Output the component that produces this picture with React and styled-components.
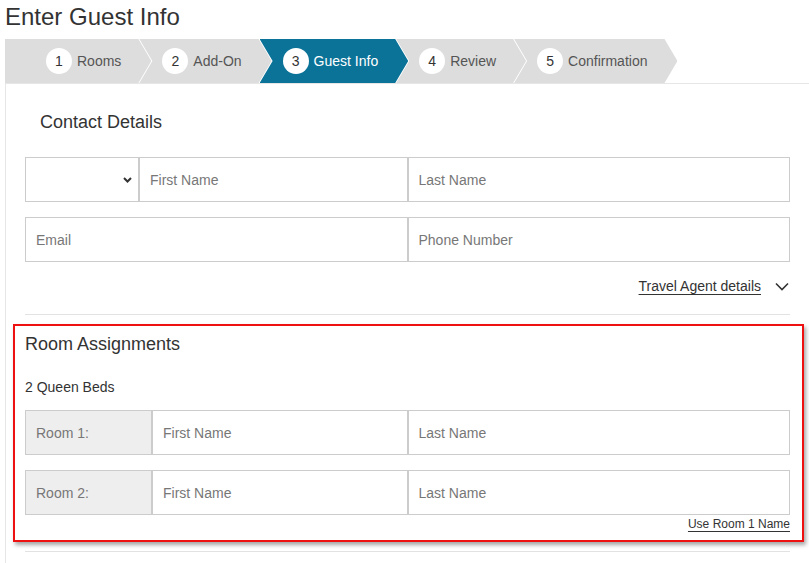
import React from "react";
import styled, { createGlobalStyle } from "styled-components";

const GlobalStyle = createGlobalStyle`
  body {
    margin: 0;
    background: #ffffff;
    font-family: "Liberation Sans", Arial, sans-serif;
    color: #333333;
  }
  * {
    box-sizing: border-box;
  }
`;

const steps = ["Rooms", "Add-On", "Guest Info", "Review", "Confirmation"];
const ACTIVE = 2;

const rooms = ["Room 1:", "Room 2:"];

function App() {
  return (
    <>
      <GlobalStyle />
      <Page>
        <Title>Enter Guest Info</Title>
        <StepBar>
          {steps.map((s, i) => (
            <Step key={s} $first={i === 0} $active={i === ACTIVE}>
              <StepNum>{i + 1}</StepNum>
              {s}
            </Step>
          ))}
        </StepBar>
        <Panel>
          <ContactTitle>Contact Details</ContactTitle>
          <FieldRow $lead={114} $mt={23}>
            <SelectBox>
              <svg width="9" height="6" viewBox="0 0 9 6">
                <polyline
                  points="1,1 4.5,4.5 8,1"
                  fill="none"
                  stroke="#333"
                  strokeWidth="2"
                />
              </svg>
            </SelectBox>
            <Field placeholder="First Name" />
            <Field placeholder="Last Name" />
          </FieldRow>
          <FieldRow $mt={15}>
            <Field placeholder="Email" />
            <Field placeholder="Phone Number" />
          </FieldRow>
          <AgentRow>
            <LinkText>Travel Agent details</LinkText>
            <svg width="14" height="9" viewBox="0 0 14 9">
              <polyline
                points="1,1.5 7,7.5 13,1.5"
                fill="none"
                stroke="#333"
                strokeWidth="1.6"
              />
            </svg>
          </AgentRow>
          <Divider $mt={18} />
          <RoomBox>
            <SectionTitle>Room Assignments</SectionTitle>
            <RoomType>2 Queen Beds</RoomType>
            {rooms.map((r, i) => (
              <FieldRow key={r} $lead={127} $mt={i === 0 ? 13 : 15}>
                <RoomLabel>{r}</RoomLabel>
                <Field placeholder="First Name" />
                <Field placeholder="Last Name" />
              </FieldRow>
            ))}
            <UseRow>
              <SmallLink>Use Room 1 Name</SmallLink>
            </UseRow>
          </RoomBox>
          <Divider $mt={9} />
        </Panel>
      </Page>
    </>
  );
}

export default App;

const Page = styled.div`
  padding-left: 5px;
`;

const Title = styled.h1`
  margin: 0 0 5px;
  font-size: 24px;
  font-weight: normal;
  line-height: 34px;
  color: #333;
`;

const StepBar = styled.div`
  display: flex;
  height: 44px;
`;

const Step = styled.div`
  display: flex;
  align-items: center;
  gap: 5px;
  height: 44px;
  padding: 0 30px 0 ${(p) => (p.$first ? "41px" : "23px")};
  margin-left: ${(p) => (p.$first ? "0" : "-12px")};
  font-size: 14px;
  color: ${(p) => (p.$active ? "#ffffff" : "#555555")};
  background: ${(p) => (p.$active ? "#0b7398" : "#dddddd")};
  clip-path: ${(p) =>
    p.$first
      ? "polygon(0 0, calc(100% - 13px) 0, 100% 50%, calc(100% - 13px) 100%, 0 100%)"
      : "polygon(0 0, calc(100% - 13px) 0, 100% 50%, calc(100% - 13px) 100%, 0 100%, 13px 50%)"};
`;

const StepNum = styled.span`
  display: flex;
  align-items: center;
  justify-content: center;
  width: 26px;
  height: 26px;
  border-radius: 50%;
  background: #ffffff;
  color: #333;
  font-size: 14px;
`;

const Panel = styled.div`
  border-top: 1px solid #e6e6e6;
  border-left: 1px solid #e6e6e6;
  padding: 0 19px 20px 19px;
`;

const ContactTitle = styled.h2`
  margin: 26px 0 0;
  padding-left: 15px;
  font-size: 18px;
  font-weight: normal;
  line-height: 24px;
  color: #333;
`;

const SectionTitle = styled.h2`
  margin: 0;
  font-size: 18px;
  font-weight: normal;
  line-height: 24px;
  color: #333;
`;

const FieldRow = styled.div`
  display: grid;
  grid-template-columns: ${(p) =>
    p.$lead ? `${p.$lead}px calc(50% - ${p.$lead}px) 50%` : "50% 50%"};
  height: 45px;
  margin-top: ${(p) => p.$mt || 0}px;
`;

const Field = styled.input`
  height: 45px;
  width: 100%;
  min-width: 0;
  border: 1px solid #cccccc;
  padding: 0 10px;
  font-family: "Liberation Sans", Arial, sans-serif;
  font-size: 14px;
  color: #333;
  background: #fff;
  outline: none;
  &::placeholder {
    color: #777777;
  }
`;

const SelectBox = styled.div`
  display: flex;
  align-items: center;
  justify-content: flex-end;
  height: 45px;
  border: 1px solid #cccccc;
  padding-right: 6px;
  background: #fff;
`;

const RoomLabel = styled.div`
  display: flex;
  align-items: center;
  height: 45px;
  border: 1px solid #cccccc;
  padding-left: 10px;
  background: #eeeeee;
  font-size: 14px;
  color: #777777;
`;

const AgentRow = styled.div`
  display: flex;
  align-items: center;
  justify-content: flex-end;
  gap: 14px;
  margin-top: 14px;
  padding-right: 1px;
  line-height: 20px;
`;

const LinkText = styled.span`
  font-size: 14px;
  color: #333;
  text-decoration: underline;
  text-underline-offset: 3px;
`;

const Divider = styled.div`
  height: 1px;
  background: #e2e2e2;
  margin-top: ${(p) => p.$mt}px;
`;

const RoomBox = styled.div`
  margin: 9px -14px 0 -12px;
  padding: 6px 12px 8px 10px;
  border: 2px solid #ee1111;
  box-shadow: 2px 3px 4px rgba(0, 0, 0, 0.35);
`;

const RoomType = styled.div`
  margin-top: 21px;
  font-size: 14px;
  line-height: 20px;
  color: #333;
`;

const UseRow = styled.div`
  display: flex;
  justify-content: flex-end;
  margin-top: 1px;
  line-height: 16px;
`;

const SmallLink = styled.span`
  font-size: 12px;
  color: #333;
  text-decoration: underline;
  text-underline-offset: 3px;
`;
